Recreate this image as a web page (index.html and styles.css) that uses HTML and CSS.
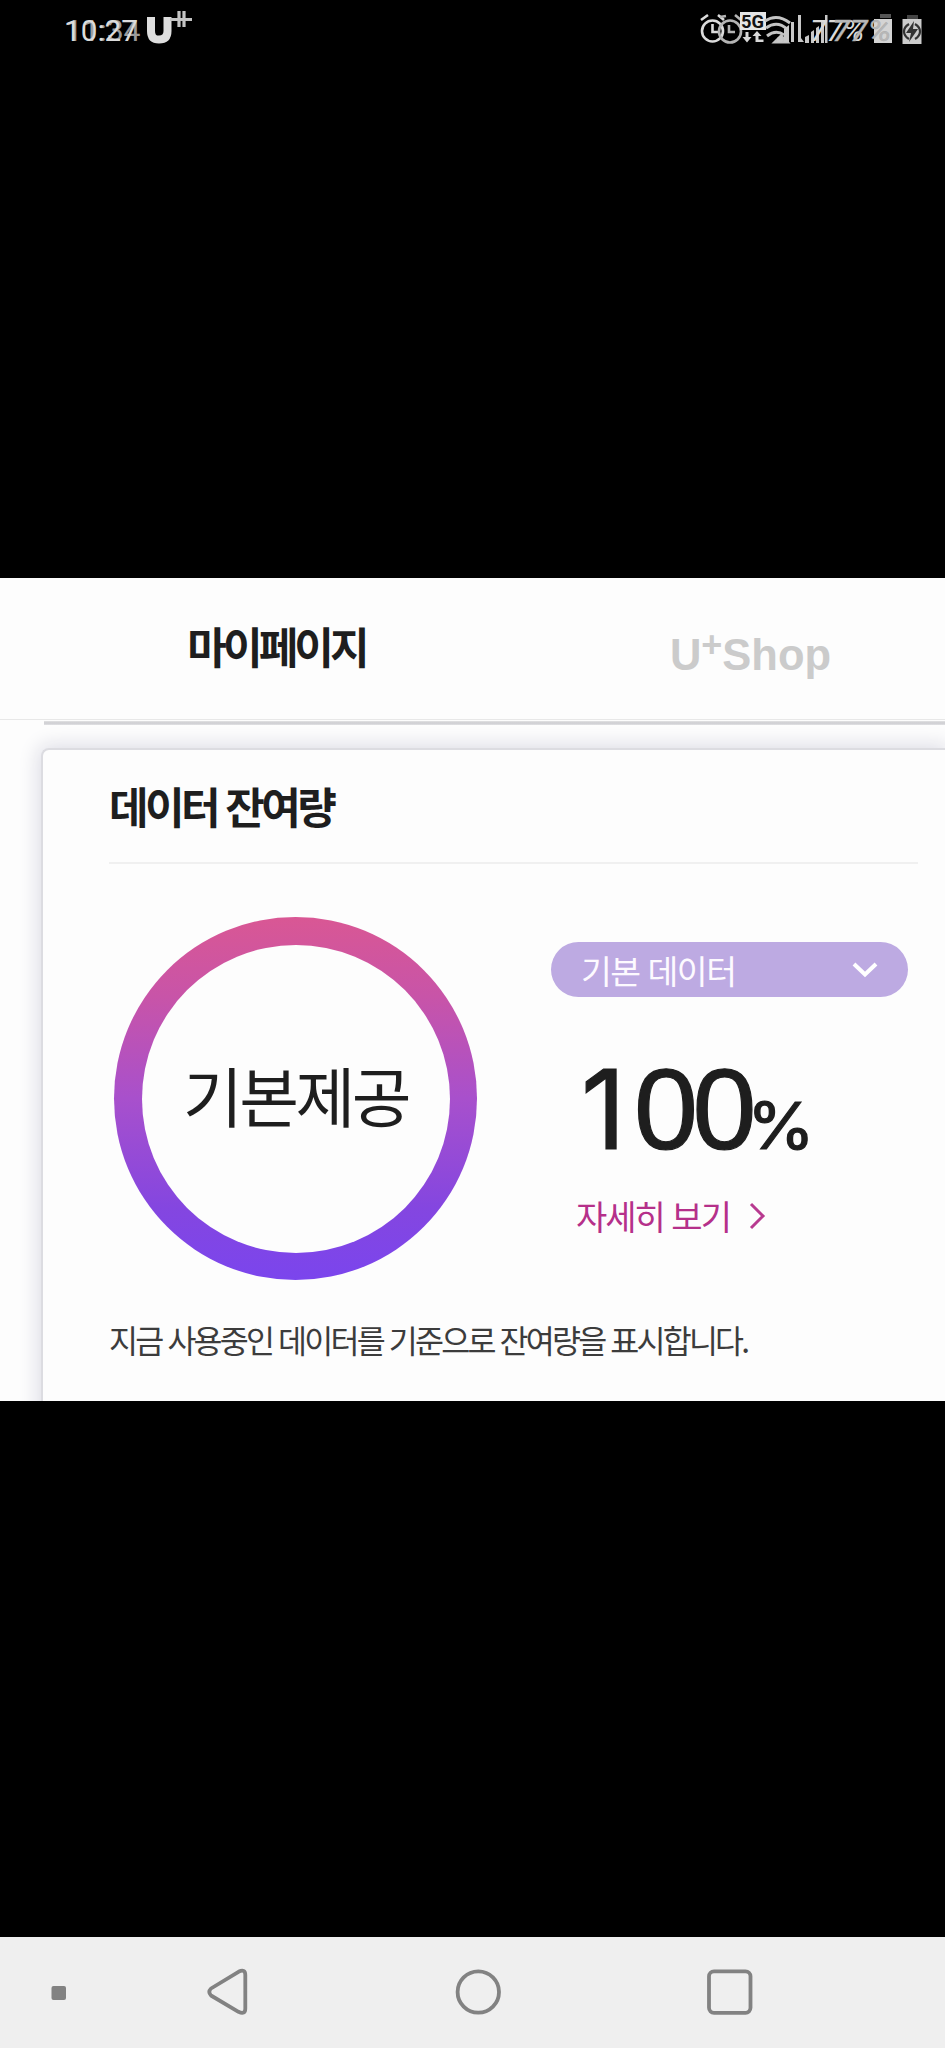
FILE: index.html
```html
<!DOCTYPE html>
<html lang="ko">
<head>
<meta charset="utf-8">
<title>데이터 잔여량</title>
<link rel="stylesheet" href="styles.css">
</head>
<body>
<div class="screen">
  <header class="status">
    <svg class="status-left" width="160" height="60" viewBox="40 0 160 60">
      <g font-family="Roboto, sans-serif" font-size="29.5" fill="#dcdcdc">
        <text x="64" y="40.500" textLength="74" lengthAdjust="spacingAndGlyphs">10:27</text>
        <text x="65.500" y="40.500" textLength="75" lengthAdjust="spacingAndGlyphs" opacity=".7">11:34</text>
      </g>
      <path d="M151 17V31Q151 39.500 159 39.500Q167.500 39.500 167.500 31V17" fill="none" stroke="#dedede" stroke-width="8"/>
      <path d="M170 19.500H192M179 11V27M184 11V27" fill="none" stroke="#c4c4c4" stroke-width="3.200"/>
    </svg>
    <svg class="status-right" width="245" height="60" viewBox="700 0 245 60">
      <g fill="none" stroke="#dcdcdc" stroke-width="2.600">
        <circle cx="712.500" cy="31" r="10.500"/>
        <path d="M712.500 24V32H718.500M701 20L708 15M718 15L724 20"/>
        <g stroke="#b4b4b4"><circle cx="730" cy="31.500" r="11"/><path d="M729 25V32H735M720 17L726 16M735 15L741 20"/></g>
      </g>
      <rect x="740" y="12" width="26" height="18" fill="#e5e5e5"/>
      <text x="741" y="27.500" font-family="Roboto, sans-serif" font-size="19" font-weight="700" fill="#111" textLength="23" lengthAdjust="spacingAndGlyphs">5G</text>
      <path d="M745.500 32h3v5h3l-4.500 5.500-4.500-5.500h3zM757 31l4.500 5h-3v3.500h5v2.500h-8v-6h-3z" fill="#d8d8d8"/>
      <g fill="none" stroke="#c4c4c4" stroke-width="3">
        <path d="M765 21Q777 13 790 23M766 28Q777 20 787 29M767 36Q776 29 784 35"/>
        <path d="M775 42L781 36L787 42Z" fill="#ccc"/>
      </g>
      <g fill="#c8c8c8">
        <path d="M777 42V38l5-3v7zM784 42V29l5-4v17zM791 42V22h3v20zM798 42V15h3v23l3 4z"/>
        <path d="M805 43v-6l4-2v8zM811 43V32l3-2v13zM816 43V28l3-2v17zM821 43V22l3-2v23zM825 43V15h2.500v28z"/>
      </g>
      <path d="M880 14h11v4h-11z" fill="#555"/>
      <rect x="874" y="19" width="18" height="24" fill="#d4d4d4"/>
      <g font-family="Roboto, sans-serif" font-size="30" font-style="italic" fill="#dadada">
        <text x="810" y="40.500" textLength="54" lengthAdjust="spacingAndGlyphs">77%</text>
        <text x="832" y="40.500" textLength="59" lengthAdjust="spacingAndGlyphs" fill="#b8b8b8" stroke="#aaa" stroke-width=".4">77%</text>
      </g>
      <path d="M907 15h11v4h-11z" fill="#444"/>
      <rect x="902.500" y="19" width="19" height="25" fill="#ccc"/>
      <g fill="none" stroke="#333" stroke-width="2.200"><path d="M909 24Q904 27 904 31.500Q904 36 909 39M915 24Q920 27 920 31.500Q920 36 915 39"/></g>
      <path d="M914 21L906 33H911L909 42L918 29H913Z" fill="#333"/>
    </svg>
  </header>

  <main class="photo">
    <nav class="tabs">
      <a class="tab tab-active">마이페이지</a>
      <a class="tab tab-shop">U<span class="tab-plus">+</span>Shop</a>
    </nav>
    <div class="rule"></div>
    <section class="card">
      <h1 class="card-title">데이터 잔여량</h1>
      <div class="usage">
        <div class="ring"><div class="ring-inner">기본제공</div></div>
        <div class="detail">
          <div class="select">
            <span class="select-text">기본 데이터</span>
            <svg width="28" height="20" viewBox="0 0 28 20"><path d="M3 4L14 14.500L25 4" fill="none" stroke="#fff" stroke-width="4"/></svg>
          </div>
          <div class="amount"><span class="one">1</span>00<span class="percent">%</span></div>
          <a class="more"><span>자세히 보기</span>
            <svg width="18" height="30" viewBox="0 0 18 30"><path d="M2 3L14 15L2 27" fill="none" stroke="#b83a90" stroke-width="3"/></svg>
          </a>
        </div>
      </div>
      <p class="note">지금 사용중인 데이터를 기준으로 잔여량을 표시합니다.</p>
    </section>
  </main>

  <footer class="navbar">
    <svg width="945" height="111" viewBox="0 0 945 111">
      <rect x="51.500" y="49" width="14.500" height="14" rx="2" fill="#828282"/>
      <g fill="none" stroke="#828282" stroke-width="3.800" stroke-linejoin="round">
        <path d="M238.500 34.800Q245.300 31.500 245.300 38V71.500Q245.300 78 238.500 74.800L211 58.500Q207.500 55 211 51.500Z"/>
        <circle cx="478.300" cy="55" r="20.700"/>
        <rect x="709" y="34.300" width="41.500" height="41.500" rx="5"/>
      </g>
    </svg>
  </footer>
</div>
</body>
</html>
```

FILE: styles.css
```css
* { box-sizing: border-box; }
body { margin: 0; background: #000; }
.screen {
  width: 945px;
  height: 2048px;
  display: flex;
  flex-direction: column;
  background: #000;
  font-family: "Noto Sans CJK KR", sans-serif;
  color: #1e1e1e;
}
.status {
  height: 578px;
  display: flex;
  justify-content: space-between;
  align-items: flex-start;
  padding-left: 40px;
}
.photo {
  height: 823px;
  background: #fdfdfd;
  overflow: hidden;
}
.tabs {
  height: 142px;
  display: grid;
  grid-template-columns: 553px 392px;
  justify-items: center;
  background: #fdfdfd;
  border-bottom: 1px solid #e8e8e8;
  position: relative;
  z-index: 1;
}
.tab { white-space: nowrap; }
.tab-active {
  padding-top: 37px;
  font-size: 43px;
  line-height: 60px;
  font-weight: 700;
  letter-spacing: -3.9px;
}
.tab-shop {
  padding: 47px 0 0 3px;
  font-family: "Liberation Sans", Arial, sans-serif;
  font-weight: 700;
  font-size: 43.5px;
  line-height: 60px;
  color: #cbcbcb;
}
.tab-plus {
  font-size: 36px;
  line-height: 0;
  vertical-align: 13px;
}
.rule {
  height: 4px;
  margin: 1px 0 0 44px;
  background: linear-gradient(#e2e2e4, #cdcdd1, #e2e2e4);
  position: relative;
  z-index: 1;
}
.card {
  height: 720px;
  margin: 23px 0 0 41px;
  padding: 27px 27px 0 66px;
  border-top-left-radius: 8px;
  border: solid #dcdce1;
  border-width: 2px 0 0 2px;
  background: #fdfdfd;
  box-shadow: 0 0 20px 3px #dcdce5;
}
.card-title {
  height: 87px;
  margin: 0;
  font-size: 43px;
  line-height: 56px;
  font-weight: 700;
  letter-spacing: -3.6px;
  border-bottom: 2px solid #f0f0f0;
}
.usage {
  display: flex;
  justify-content: space-between;
  padding: 53px 10px 0 5px;
}
.ring {
  width: 363px;
  height: 363px;
  padding: 27.500px;
  border-radius: 50%;
  background: linear-gradient(#d95794, #c854a8 22%, #a850cc 50%, #8446e0 80%, #7b45ed);
}
.ring-inner {
  height: 100%;
  border-radius: 50%;
  background: #fdfdfd;
  text-align: center;
  font-size: 65px;
  line-height: 299px;
  letter-spacing: -3.6px;
}
.detail { width: 357px; padding-top: 25px; }
.select {
  height: 55px;
  padding: 0 29px 0 30px;
  display: flex;
  align-items: center;
  justify-content: space-between;
  border-radius: 28px;
  background: #bdaae2;
  color: #fdfaff;
}
.select-text {
  font-size: 33.5px;
  line-height: 55px;
  letter-spacing: -1.5px;
  white-space: nowrap;
}
.amount {
  height: 197px;
  padding-left: 24px;
  font-family: "Liberation Sans", Arial, sans-serif;
  font-size: 115px;
  line-height: 225px;
  letter-spacing: -5.5px;
  -webkit-text-stroke: 1.2px #1e1e1e;
  white-space: nowrap;
}
.one {
  display: inline-block;
  width: 59px;
  padding-left: 6px;
  font-family: Inter, sans-serif;
  font-size: 110px;
  line-height: 0;
}
.percent {
  display: inline-block;
  margin-left: -4px;
  transform: scaleX(1.08);
  transform-origin: left;
  font-family: Inter, sans-serif;
  font-size: 64px;
  line-height: 0;
  letter-spacing: 0;
}
.more {
  display: flex;
  align-items: center;
  gap: 19px;
  padding-left: 25px;
  font-size: 34px;
  line-height: 44px;
  letter-spacing: -2px;
  color: #b5308a;
}
.note {
  margin: 34px 0 0;
  font-size: 31.5px;
  line-height: 50px;
  letter-spacing: -2.8px;
  color: #3c3c3c;
  white-space: nowrap;
}
.navbar {
  height: 111px;
  margin-top: auto;
  background: #efefef;
}
.navbar svg { display: block; }
```
